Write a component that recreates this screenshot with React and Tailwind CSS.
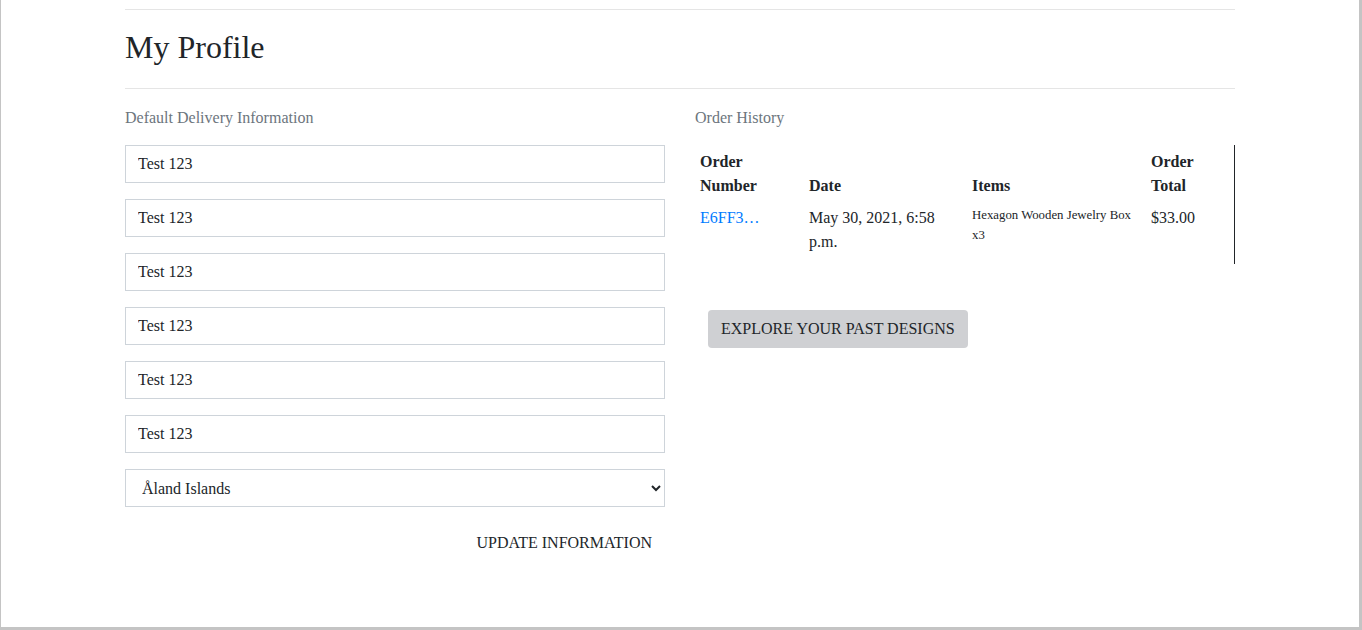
const fields = ["Test 123", "Test 123", "Test 123", "Test 123", "Test 123", "Test 123"];

const orders = [
    {
        id: "E6FF3…",
        date: "May 30, 2021, 6:58 p.m.",
        items: "Hexagon Wooden Jewelry Box x3",
        total: "$33.00",
    },
];

const App = () => {
    return (
        <div
            className="h-[630px] bg-white border-l border-r-[3px] border-b-[3px] border-[#c4c4c4] text-[#212529] overflow-hidden"
            style={{ fontFamily: '"Liberation Serif", "Times New Roman", serif' }}
        >
            <div className="w-[1110px] mx-auto">
                <hr className="mt-[9px] border-t border-[#e5e5e5]" />
                <h2 className="mt-[18px] mb-0 text-[32px] leading-[38px]">My Profile</h2>
                <hr className="mt-[22px] border-t border-[#e5e5e5]" />

                <div className="flex gap-[30px] mt-4">
                    {/* delivery info */}
                    <div className="w-[540px]">
                        <p className="pt-px text-base leading-6 text-[#6c757d]">Default Delivery Information</p>
                        <form className="mt-[15px] flex flex-col gap-4">
                            {fields.map((value, i) => (
                                <input
                                    key={i}
                                    type="text"
                                    defaultValue={value}
                                    className="h-[38px] w-full border border-[#ced4da] px-3 text-base leading-6 text-[#212529] outline-none"
                                    style={{ fontFamily: "inherit" }}
                                />
                            ))}
                            <select
                                defaultValue="AX"
                                className="h-[38px] w-full border border-[#ced4da] bg-white px-3 text-base text-[#212529] outline-none"
                                style={{ fontFamily: "inherit" }}
                            >
                                <option value="AX">Åland Islands</option>
                            </select>
                            <div className="flex justify-end">
                                <button type="button" className="h-[38px] pl-3 pr-[13px] pt-px text-base leading-6 text-[#212529]">
                                    UPDATE INFORMATION
                                </button>
                            </div>
                        </form>
                    </div>

                    {/* order history */}
                    <div className="w-[540px]">
                        <p className="pt-px text-base leading-6 text-[#6c757d]">Order History</p>
                        <div className="mt-[15px] w-[540px] border-r border-[#212529] pb-[7px]">
                            <table className="w-[539px] table-fixed border-collapse text-left">
                                <colgroup>
                                    <col className="w-[109px]" />
                                    <col className="w-[163px]" />
                                    <col className="w-[179px]" />
                                    <col className="w-[88px]" />
                                </colgroup>
                                <thead>
                                    <tr className="align-bottom font-bold text-base leading-6">
                                        <th className="px-[5px] pt-[5px] pb-[3px]">Order Number</th>
                                        <th className="px-[5px] pt-[5px] pb-[3px]">Date</th>
                                        <th className="px-[5px] pt-[5px] pb-[3px]">Items</th>
                                        <th className="px-[5px] pt-[5px] pb-[3px]">Order Total</th>
                                    </tr>
                                </thead>
                                <tbody>
                                    {orders.map((order) => (
                                        <tr key={order.id} className="align-top text-base leading-6">
                                            <td className="px-[5px] pt-[5px] pb-[3px]">
                                                <a href="#" className="text-[#007bff]">{order.id}</a>
                                            </td>
                                            <td className="px-[5px] pt-[5px] pb-[3px]">{order.date}</td>
                                            <td className="px-[5px] pt-[5px] pb-[3px] text-[12.8px] leading-[19.5px]">{order.items}</td>
                                            <td className="px-[5px] pt-[5px] pb-[3px]">{order.total}</td>
                                        </tr>
                                    ))}
                                </tbody>
                            </table>
                        </div>
                        <button
                            type="button"
                            className="mt-[46px] ml-[13px] h-[38px] rounded px-[13px] bg-[#cfd0d3] text-base leading-6 text-[#212529]"
                        >
                            EXPLORE YOUR PAST DESIGNS
                        </button>
                    </div>
                </div>
            </div>
        </div>
    );
};

export default App;
